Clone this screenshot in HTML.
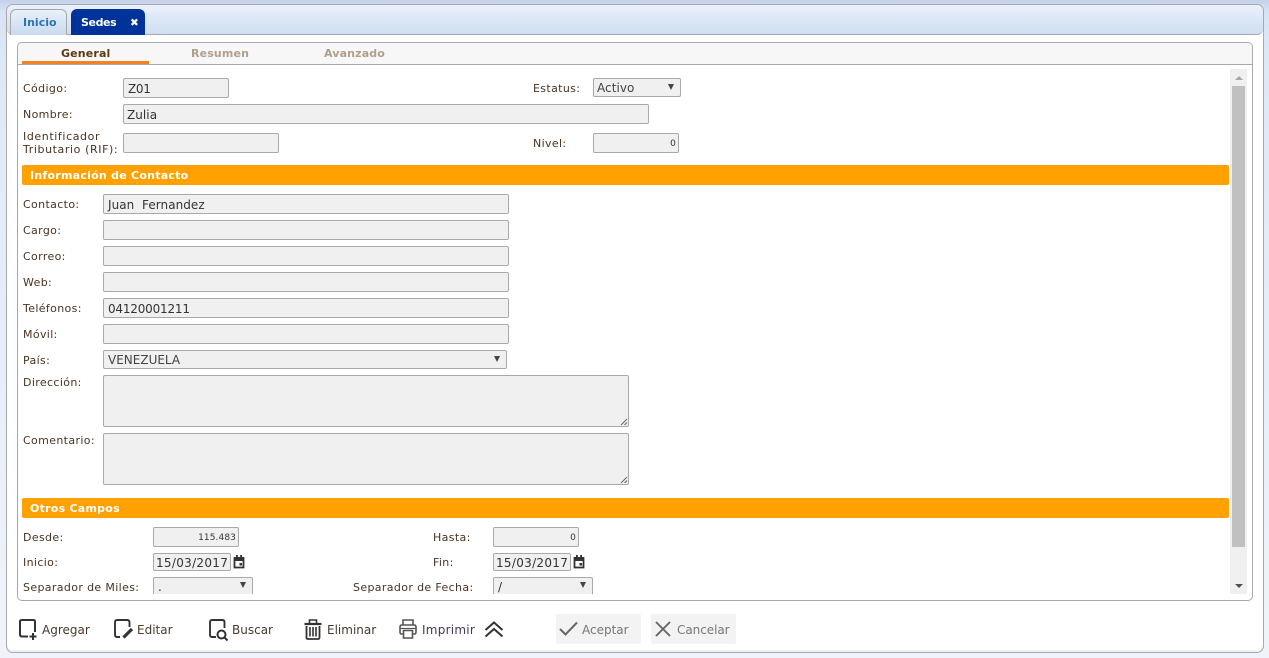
<!DOCTYPE html>
<html><head><meta charset="utf-8">
<style>
html,body{margin:0;padding:0;width:1269px;height:658px;overflow:hidden;background:#fff}
body{position:relative;font-family:"DejaVu Sans","Liberation Sans",sans-serif;font-size:11px;color:#222}
div,span{position:absolute;box-sizing:border-box;white-space:nowrap}
#bg{left:0;top:0;width:1269px;height:658px;background:linear-gradient(#c3d1ea 0,#d8e3f3 12px,#dfe8f5 60px,#f0f4fa 100%)}
#outer{left:6px;top:4px;width:1258px;height:649px;background:#fff;border:1px solid #a8a8a8;border-radius:7px;box-shadow:inset 0 -2px 0 #eef1f5}
#strip{left:7px;top:5px;width:1256px;height:30px;border-bottom:1px solid #a8a8a8;border-radius:6px 6px 6px 6px;background:linear-gradient(#eaf1fb,#cfdef2)}
.t{font-weight:bold;font-size:11px;letter-spacing:.15px}
.l{color:#4a3320;letter-spacing:.36px;line-height:13px}
.i{background:#f0f0f0;border:1px solid #a9a9a9;border-radius:2px;color:#333;font-size:12px;padding-left:4px;line-height:20px;letter-spacing:.05px}
.n{text-align:right;padding:0 2px 0 0;font-size:9px;line-height:21px;letter-spacing:.1px}
.arr{width:0;height:0;border-left:3.5px solid transparent;border-right:3.5px solid transparent;border-top:6px solid #444}
.bar{left:22px;width:1207px;height:20px;background:#ffa100;border-radius:2px;color:#fff;font-weight:bold;font-size:11px;line-height:21px;padding-left:8px;letter-spacing:.25px}
.b{font-size:12px;color:#4a3a2a;line-height:16px;letter-spacing:0}
svg{position:absolute;overflow:visible}
</style></head><body>
<div id="bg"></div>
<div id="outer"></div>
<div id="strip"></div>

<div style="left:10px;top:9px;width:57px;height:26px;background:linear-gradient(#e9f0fa,#c9daf0);border:1px solid #a8a8a8;border-bottom:none;border-radius:6px 6px 0 0"></div>
<div class="t" style="left:23px;top:16px;color:#2e75b0;line-height:14px;letter-spacing:0">Inicio</div>
<div style="left:71px;top:9px;width:74px;height:26px;background:#003399;border-radius:6px 6px 0 0"></div>
<div class="t" style="left:81px;top:16px;color:#fff;line-height:14px;letter-spacing:-.4px">Sedes</div>
<div class="t" style="left:130px;top:16px;color:#fff;line-height:14px;font-size:10.5px">✖</div>

<div style="left:17px;top:42px;width:1236px;height:559px;background:#fff;border:1px solid #a8a8a8;border-radius:5px"></div>
<div style="left:18px;top:43px;width:1234px;height:22px;background:#f7f7f7;border-bottom:1px solid #a8a8a8;border-radius:4px 4px 0 0"></div>
<div style="left:22px;top:61px;width:127px;height:3px;background:#f58220"></div>
<div class="t" style="left:61px;top:47px;color:#5b3a12;line-height:14px">General</div>
<div class="t" style="left:191px;top:47px;color:#b09f8c;line-height:14px">Resumen</div>
<div class="t" style="left:324px;top:47px;color:#b09f8c;line-height:14px">Avanzado</div>

<div style="left:1230px;top:69px;width:17px;height:525px;background:#f0f0f0"></div>
<div style="left:1232px;top:86px;width:13px;height:461px;background:#c0c0c0"></div>
<div style="left:1235px;top:76px;width:0;height:0;border-left:4px solid transparent;border-right:4px solid transparent;border-bottom:4px solid #a6a6a6"></div>
<div style="left:1235px;top:584px;width:0;height:0;border-left:4px solid transparent;border-right:4px solid transparent;border-top:4px solid #505050"></div>

<div class="l" style="left:23px;top:82px">Código:</div>
<div class="i" style="left:123px;top:78px;width:106px;height:20px;letter-spacing:-.3px">Z01</div>
<div class="l" style="left:533px;top:82px">Estatus:</div>
<div class="i" style="left:593px;top:78px;width:88px;height:19px;line-height:18px;padding-left:3px;color:#444">Activo</div>
<div class="arr" style="left:668px;top:84px"></div>
<div class="l" style="left:23px;top:108px">Nombre:</div>
<div class="i" style="left:123px;top:104px;width:526px;height:20px;padding-left:3px">Zulia</div>
<div class="l" style="left:23px;top:130px;letter-spacing:.6px">Identificador<br>Tributario (RIF):</div>
<div class="i" style="left:123px;top:133px;width:156px;height:20px"></div>
<div class="l" style="left:533px;top:137px">Nivel:</div>
<div class="i n" style="left:593px;top:133px;width:86px;height:20px">0</div>

<div class="bar" style="top:165px">Información de Contacto</div>

<div class="l" style="left:23px;top:198px">Contacto:</div>
<div class="i" style="left:103px;top:194px;width:406px;height:20px">Juan&nbsp; Fernandez</div>
<div class="l" style="left:23px;top:224px">Cargo:</div>
<div class="i" style="left:103px;top:220px;width:406px;height:20px"></div>
<div class="l" style="left:23px;top:250px">Correo:</div>
<div class="i" style="left:103px;top:246px;width:406px;height:20px"></div>
<div class="l" style="left:23px;top:276px">Web:</div>
<div class="i" style="left:103px;top:272px;width:406px;height:20px"></div>
<div class="l" style="left:23px;top:302px">Teléfonos:</div>
<div class="i" style="left:103px;top:298px;width:406px;height:20px;letter-spacing:-.2px">04120001211</div>
<div class="l" style="left:23px;top:328px">Móvil:</div>
<div class="i" style="left:103px;top:324px;width:406px;height:20px"></div>
<div class="l" style="left:23px;top:354px">País:</div>
<div class="i" style="left:103px;top:350px;width:404px;height:19px;line-height:18px;font-size:12px;letter-spacing:0;color:#444">VENEZUELA</div>
<div class="arr" style="left:494px;top:356px"></div>

<div class="l" style="left:23px;top:376px">Dirección:</div>
<div class="i" style="left:103px;top:375px;width:526px;height:52px"></div>
<svg style="left:620px;top:418px" width="8" height="8"><path d="M1 7L7 1M4.5 7L7 4.5" stroke="#666" stroke-width="1" fill="none"/></svg>
<div class="l" style="left:23px;top:434px">Comentario:</div>
<div class="i" style="left:103px;top:433px;width:526px;height:52px"></div>
<svg style="left:620px;top:476px" width="8" height="8"><path d="M1 7L7 1M4.5 7L7 4.5" stroke="#666" stroke-width="1" fill="none"/></svg>

<div class="bar" style="top:498px">Otros Campos</div>

<div class="l" style="left:23px;top:531px">Desde:</div>
<div class="i n" style="left:153px;top:527px;width:86px;height:20px">115.483</div>
<div class="l" style="left:433px;top:531px">Hasta:</div>
<div class="i n" style="left:493px;top:527px;width:86px;height:20px">0</div>
<div class="l" style="left:23px;top:556px">Inicio:</div>
<div class="i" style="left:153px;top:553px;width:78px;height:18px;line-height:18px;padding-left:2px;letter-spacing:.3px">15/03/2017</div>
<svg style="left:233px;top:555px" width="12" height="14"><path d="M1.5 3H10.5V12.5H1.5Z" fill="none" stroke="#333" stroke-width="1.8"/><rect x="1" y="2" width="10" height="4" fill="#333"/><rect x="3" y="0" width="1.8" height="2.5" fill="#333"/><rect x="7.2" y="0" width="1.8" height="2.5" fill="#333"/><rect x="6.5" y="8" width="2.5" height="2.5" fill="#333"/></svg>
<div class="l" style="left:433px;top:556px">Fin:</div>
<div class="i" style="left:493px;top:553px;width:78px;height:18px;line-height:18px;padding-left:2px;letter-spacing:.3px">15/03/2017</div>
<svg style="left:573px;top:555px" width="12" height="14"><path d="M1.5 3H10.5V12.5H1.5Z" fill="none" stroke="#333" stroke-width="1.8"/><rect x="1" y="2" width="10" height="4" fill="#333"/><rect x="3" y="0" width="1.8" height="2.5" fill="#333"/><rect x="7.2" y="0" width="1.8" height="2.5" fill="#333"/><rect x="6.5" y="8" width="2.5" height="2.5" fill="#333"/></svg>
<div class="l" style="left:23px;top:581px">Separador de Miles:</div>
<div class="i" style="left:153px;top:577px;width:100px;height:17px;border-bottom:none;border-radius:2px 2px 0 0;line-height:19px">.</div>
<div class="arr" style="left:240px;top:582px"></div>
<div class="l" style="left:353px;top:581px">Separador de Fecha:</div>
<div class="i" style="left:493px;top:577px;width:100px;height:17px;border-bottom:none;border-radius:2px 2px 0 0;line-height:18px">/</div>
<div class="arr" style="left:580px;top:582px"></div>

<svg style="left:19px;top:619px" width="20" height="21"><path d="M9 17.5H3Q1 17.5 1 15.5V2.5Q1 1 3 1H14Q16 1 16 2.5V13" fill="none" stroke="#333" stroke-width="2"/><path d="M14 14V21M10.5 17.5H17.5" stroke="#333" stroke-width="2" fill="none"/></svg>
<div class="b" style="left:42px;top:622px">Agregar</div>
<svg style="left:114px;top:619px" width="20" height="21"><path d="M6 18H3Q1 18 1 16V3Q1 1 3 1H13Q15.5 1 15.5 3.5V8" fill="none" stroke="#333" stroke-width="1.9"/><path d="M9.5 18.5L18 10" stroke="#333" stroke-width="3.2" fill="none"/></svg>
<div class="b" style="left:137px;top:622px">Editar</div>
<svg style="left:209px;top:619px" width="20" height="22"><path d="M7 18H3Q1 18 1 16V3Q1 1 3 1H13Q15.5 1 15.5 3V9" fill="none" stroke="#333" stroke-width="1.9"/><circle cx="12.5" cy="15.5" r="4" fill="none" stroke="#333" stroke-width="2"/><path d="M15.5 18.5L18.5 21.5" stroke="#333" stroke-width="2"/></svg>
<div class="b" style="left:232px;top:622px">Buscar</div>
<svg style="left:304px;top:619px" width="18" height="21"><path d="M0.5 5H17.5" stroke="#333" stroke-width="2.2"/><path d="M5.5 4V1H12.5V4" fill="none" stroke="#333" stroke-width="1.6"/><path d="M2.5 7V18.5Q2.5 20 4 20H14Q15.5 20 15.5 18.5V7" fill="none" stroke="#333" stroke-width="1.8"/><path d="M6 8V17.5M9 8V17.5M12 8V17.5" stroke="#333" stroke-width="1.6"/></svg>
<div class="b" style="left:327px;top:622px">Eliminar</div>
<svg style="left:399px;top:619px" width="18" height="20"><path d="M4 6V1H14V6M4 15H2.5Q1 15 1 13V8Q1 6 3 6H15Q17 6 17 8V13Q17 15 15.5 15H14" fill="none" stroke="#555" stroke-width="1.6"/><path d="M4.5 11.5H13.5V19H4.5Z" fill="none" stroke="#555" stroke-width="1.6"/><path d="M1.5 9.5H16.5" stroke="#555" stroke-width="1.2"/></svg>
<div class="b" style="left:422px;top:622px;color:#4a3358;letter-spacing:.25px">Imprimir</div>
<svg style="left:484px;top:621px" width="20" height="16"><path d="M1.5 9L10 1.5L18.5 9M1.5 15.5L10 8L18.5 15.5" fill="none" stroke="#333" stroke-width="2"/></svg>

<div style="left:556px;top:614px;width:85px;height:30px;background:#f3f3f3;border-radius:2px"></div>
<svg style="left:559px;top:621px" width="19" height="15"><path d="M1 8L6.5 13.5L18 1.5" fill="none" stroke="#666" stroke-width="2"/></svg>
<div class="b" style="left:582px;top:622px;color:#777">Aceptar</div>
<div style="left:651px;top:614px;width:85px;height:30px;background:#f3f3f3;border-radius:2px"></div>
<svg style="left:655px;top:621px" width="16" height="16"><path d="M1 1L15 15M15 1L1 15" fill="none" stroke="#666" stroke-width="1.9"/></svg>
<div class="b" style="left:677px;top:622px;color:#777;letter-spacing:-.05px">Cancelar</div>
</body></html>
